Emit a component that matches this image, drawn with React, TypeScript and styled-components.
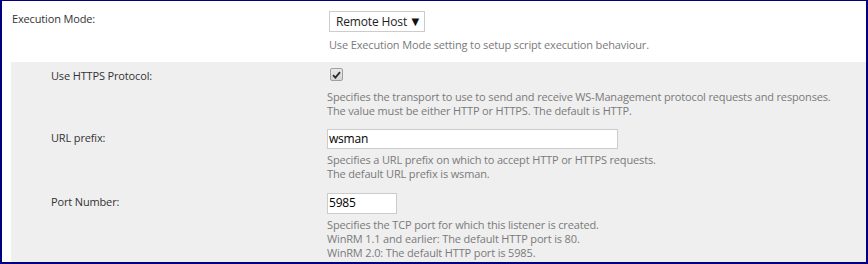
import styled, { createGlobalStyle } from "styled-components";

const GlobalStyle = createGlobalStyle`
  html, body {
    margin: 0;
    padding: 0;
    background: #fff;
  }
  body {
    font-family: "Open Sans", "Liberation Sans", sans-serif;
    font-size: 11px;
    letter-spacing: -0.15px;
    line-height: 14px;
    color: #333;
  }
`;

// Window frame round the settings.
const Frame = styled.div`
  box-sizing: border-box;
  width: 868px;
  height: 264px;
  border-style: solid;
  border-color: #000080;
  border-width: 1px 2px 2px 2px;
  overflow: hidden;
  background: #fff;
  display: flex;
  flex-direction: column;
`;

// One setting: label on the left, control and help on the right.
const Row = styled.div<{ $indent: number; $labelWidth: number; $gap?: number }>`
  display: grid;
  grid-template-columns: ${(p) => p.$labelWidth}px 1fr;
  padding-left: ${(p) => p.$indent}px;
  margin-top: ${(p) => p.$gap ?? 0}px;
`;

const Label = styled.div<{ $top: number }>`
  padding-top: ${(p) => p.$top}px;
  color: #333;
  white-space: nowrap;
`;

const Value = styled.div`
  display: flex;
  flex-direction: column;
  align-items: flex-start;
`;

const Help = styled.div<{ $top: number }>`
  margin-top: ${(p) => p.$top}px;
  color: #7a7a7a;
  white-space: nowrap;
`;

// Nested group with grey background.
const SubGroup = styled.div`
  flex: 1;
  margin-left: 9px;
  margin-top: 10px;
  background: #efefef;
  padding-top: 3px;
`;

const TopSection = styled.div`
  padding-top: 10px;
`;

const Dropdown = styled.div`
  box-sizing: border-box;
  height: 21px;
  width: 96px;
  border: 1px solid #ccc;
  background: #fff;
  display: flex;
  align-items: center;
  justify-content: space-between;
  padding: 0 5px 0 6px;
  color: #222;
  font-size: 12px;
`;

const Arrow = styled.span`
  font-family: "DejaVu Sans", sans-serif;
  font-size: 10px;
  color: #111;
`;

const TextBox = styled.div<{ $width: number; $height: number }>`
  box-sizing: border-box;
  width: ${(p) => p.$width}px;
  height: ${(p) => p.$height}px;
  border: 1px solid #ccc;
  background: #fff;
  padding: 2px 1px;
  color: #000;
  font-size: 12px;
  letter-spacing: -0.2px;
`;

const CheckWrap = styled.div`
  height: 20px;
  display: flex;
  align-items: flex-start;
  padding: 3px 0 0 3px;
  box-sizing: border-box;
`;

const CheckBox = styled.span`
  box-sizing: border-box;
  width: 13px;
  height: 13px;
  border: 1px solid #a0a0a0;
  border-radius: 2px;
  background: linear-gradient(#e8e8e8, #d4d4d4);
  display: flex;
  align-items: center;
  justify-content: center;
`;

export default function App() {
  return (
    <Frame>
      <GlobalStyle />
      <TopSection>
        <Row $indent={10} $labelWidth={317}>
          <Label $top={1}>Execution Mode:</Label>
          <Value>
            <Dropdown>
              <span>Remote Host</span>
              <Arrow>▼</Arrow>
            </Dropdown>
            <Help $top={6}>Use Execution Mode setting to setup script execution behaviour.</Help>
          </Value>
        </Row>
      </TopSection>
      <SubGroup>
        <Row $indent={40} $labelWidth={276}>
          <Label $top={4}>Use HTTPS Protocol:</Label>
          <Value>
            <CheckWrap>
              <CheckBox>
                <svg width="9" height="8" viewBox="0 0 9 8">
                  <path d="M1 4.2 L3.4 6.6 L8 1.2" stroke="#2a2a2a" strokeWidth="1.8" fill="none" />
                </svg>
              </CheckBox>
            </CheckWrap>
            <Help $top={5}>
              Specifies the transport to use to send and receive WS-Management protocol requests and responses.
              <br />
              The value must be either HTTP or HTTPS. The default is HTTP.
            </Help>
          </Value>
        </Row>
        <Row $indent={40} $labelWidth={276} $gap={11}>
          <Label $top={2}>URL prefix:</Label>
          <Value>
            <TextBox $width={291} $height={20}>wsman</TextBox>
            <Help $top={4}>
              Specifies a URL prefix on which to accept HTTP or HTTPS requests.
              <br />
              The default URL prefix is wsman.
            </Help>
          </Value>
        </Row>
        <Row $indent={40} $labelWidth={276} $gap={12}>
          <Label $top={2}>Port Number:</Label>
          <Value>
            <TextBox $width={70} $height={21}>5985</TextBox>
            <Help $top={4}>
              Specifies the TCP port for which this listener is created.
              <br />
              WinRM 1.1 and earlier: The default HTTP port is 80.
              <br />
              WinRM 2.0: The default HTTP port is 5985.
            </Help>
          </Value>
        </Row>
      </SubGroup>
    </Frame>
  );
}
